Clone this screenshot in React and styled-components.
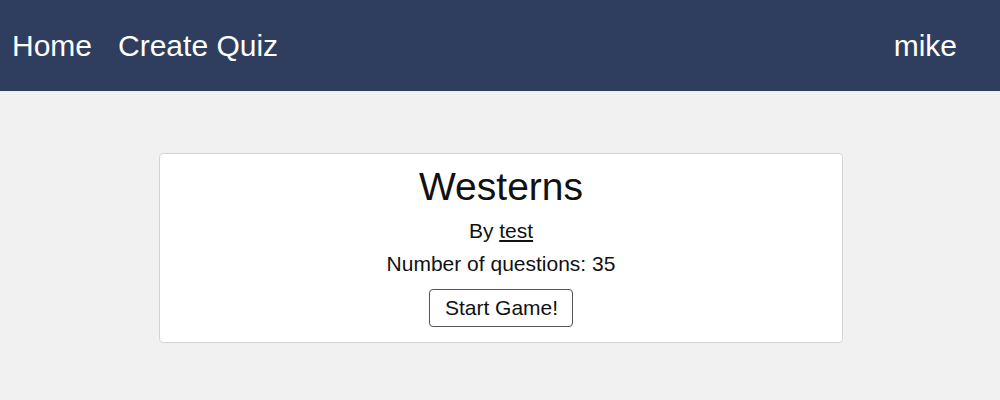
import React from "react";
import styled, { createGlobalStyle } from "styled-components";

const Global = createGlobalStyle`
  html, body { margin: 0; padding: 0; }
  body {
    background: #f1f1f1;
    font-family: "Liberation Sans", Arial, Helvetica, sans-serif;
    color: #111;
  }
`;

const NavBar = styled.nav`
  height: 91px;
  background: #2f3e5e;
  display: flex;
  align-items: center;
  padding: 0 43px 0 12px;
  box-sizing: border-box;
`;

const NavGroup = styled.div`
  display: flex;
  align-items: center;
  gap: 26px;
`;

const NavLink = styled.a`
  color: #fff;
  font-size: 30px;
  text-decoration: none;
  cursor: pointer;
`;

const Spacer = styled.div`
  flex: 1;
`;

const Card = styled.section`
  width: 684px;
  box-sizing: border-box;
  margin: 62px 0 0 159px;
  background: #fff;
  border: 1px solid #d4d4d4;
  border-radius: 4px;
  padding: 11px 0 15px;
  display: flex;
  flex-direction: column;
  align-items: center;
`;

const Title = styled.h1`
  margin: 0 0 10px;
  font-size: 39px;
  line-height: 44px;
  font-weight: normal;
  color: #111;
`;

const Line = styled.p`
  margin: 0 0 ${(p) => p.$gap}px;
  font-size: 21px;
  line-height: 24px;
  color: #111;
`;

const Author = styled.a`
  color: #111;
  text-decoration: underline;
`;

const StartButton = styled.button`
  font-family: inherit;
  font-size: 21px;
  line-height: 24px;
  color: #111;
  background: #fff;
  border: 1px solid #555;
  border-radius: 4px;
  padding: 6px 14px 6px 15px;
  cursor: pointer;
`;

export default function App() {
  return (
    <>
      <Global />
      <NavBar>
        <NavGroup>
          <NavLink>Home</NavLink>
          <NavLink>Create Quiz</NavLink>
        </NavGroup>
        <Spacer />
        <NavLink>mike</NavLink>
      </NavBar>
      <Card>
        <Title>Westerns</Title>
        <Line $gap={9}>
          By <Author>test</Author>
        </Line>
        <Line $gap={13}>Number of questions: 35</Line>
        <StartButton>Start Game!</StartButton>
      </Card>
    </>
  );
}
